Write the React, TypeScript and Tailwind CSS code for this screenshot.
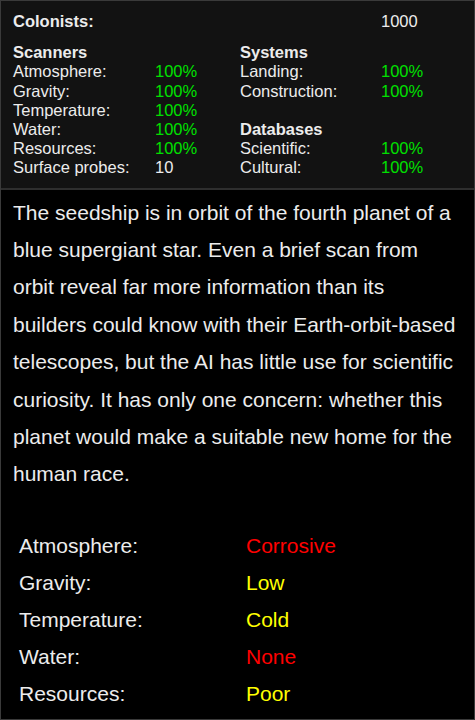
const green = 'text-[#00e000]';

const scanners = [
  ['Atmosphere:', '100%'],
  ['Gravity:', '100%'],
  ['Temperature:', '100%'],
  ['Water:', '100%'],
  ['Resources:', '100%'],
];

const planet = [
  { label: 'Atmosphere:', value: 'Corrosive', bad: true },
  { label: 'Gravity:', value: 'Low', bad: false },
  { label: 'Temperature:', value: 'Cold', bad: false },
  { label: 'Water:', value: 'None', bad: true },
  { label: 'Resources:', value: 'Poor', bad: false },
];

function Row({ label, value, valueClass = green }: { label: string; value: string; valueClass?: string }) {
  return (
    <div className="grid grid-cols-[142px_1fr]">
      <span>{label}</span>
      <span className={valueClass}>{value}</span>
    </div>
  );
}

export default function App() {
  return (
    <div
      className="flex min-h-screen flex-col border border-[#3a3a3a] bg-black text-[#ececec]"
      style={{ fontFamily: '"Liberation Sans", Arial, sans-serif' }}
    >
      <div className="border-b-2 border-[#2e2e2e] bg-[#121212] px-3 pb-[10px] pt-[11px] text-[16.5px] leading-[19.2px]">
        <div className="grid grid-cols-[227px_1fr]">
          <span className="font-bold">Colonists:</span>
          <div className="grid grid-cols-[141px_1fr]">
            <span />
            <span>1000</span>
          </div>
        </div>
        <div className="mt-3 grid grid-cols-[227px_1fr]">
          <div className="flex flex-col">
            <span className="font-bold">Scanners</span>
            {scanners.map(([l, v]) => (
              <Row key={l} label={l} value={v} />
            ))}
            <Row label="Surface probes:" value="10" valueClass="" />
          </div>
          <div className="flex flex-col">
            <span className="font-bold">Systems</span>
            <div className="grid grid-cols-[141px_1fr]">
              <span>Landing:</span>
              <span className={green}>100%</span>
            </div>
            <div className="grid grid-cols-[141px_1fr]">
              <span>Construction:</span>
              <span className={green}>100%</span>
            </div>
            <div className="h-[19.2px]" />
            <span className="font-bold">Databases</span>
            <div className="grid grid-cols-[141px_1fr]">
              <span>Scientific:</span>
              <span className={green}>100%</span>
            </div>
            <div className="grid grid-cols-[141px_1fr]">
              <span>Cultural:</span>
              <span className={green}>100%</span>
            </div>
          </div>
        </div>
      </div>

      <p className="px-3 pt-[4px] text-[21px] leading-[37.4px]">
        The seedship is in orbit of the fourth planet of a blue supergiant star. Even a brief scan from orbit
        reveal far more information than its builders could know with their Earth-orbit-based telescopes, but
        the AI has little use for scientific curiosity. It has only one concern: whether this planet would make a
        suitable new home for the human race.
      </p>

      <div className="mt-[34px] flex flex-col px-[18px] text-[21px] leading-[37px]">
        {planet.map((p) => (
          <div key={p.label} className="grid grid-cols-[227px_1fr]">
            <span>{p.label}</span>
            <span className={p.bad ? 'text-[#ff0000]' : 'text-[#ffff00]'}>{p.value}</span>
          </div>
        ))}
      </div>
    </div>
  );
}
